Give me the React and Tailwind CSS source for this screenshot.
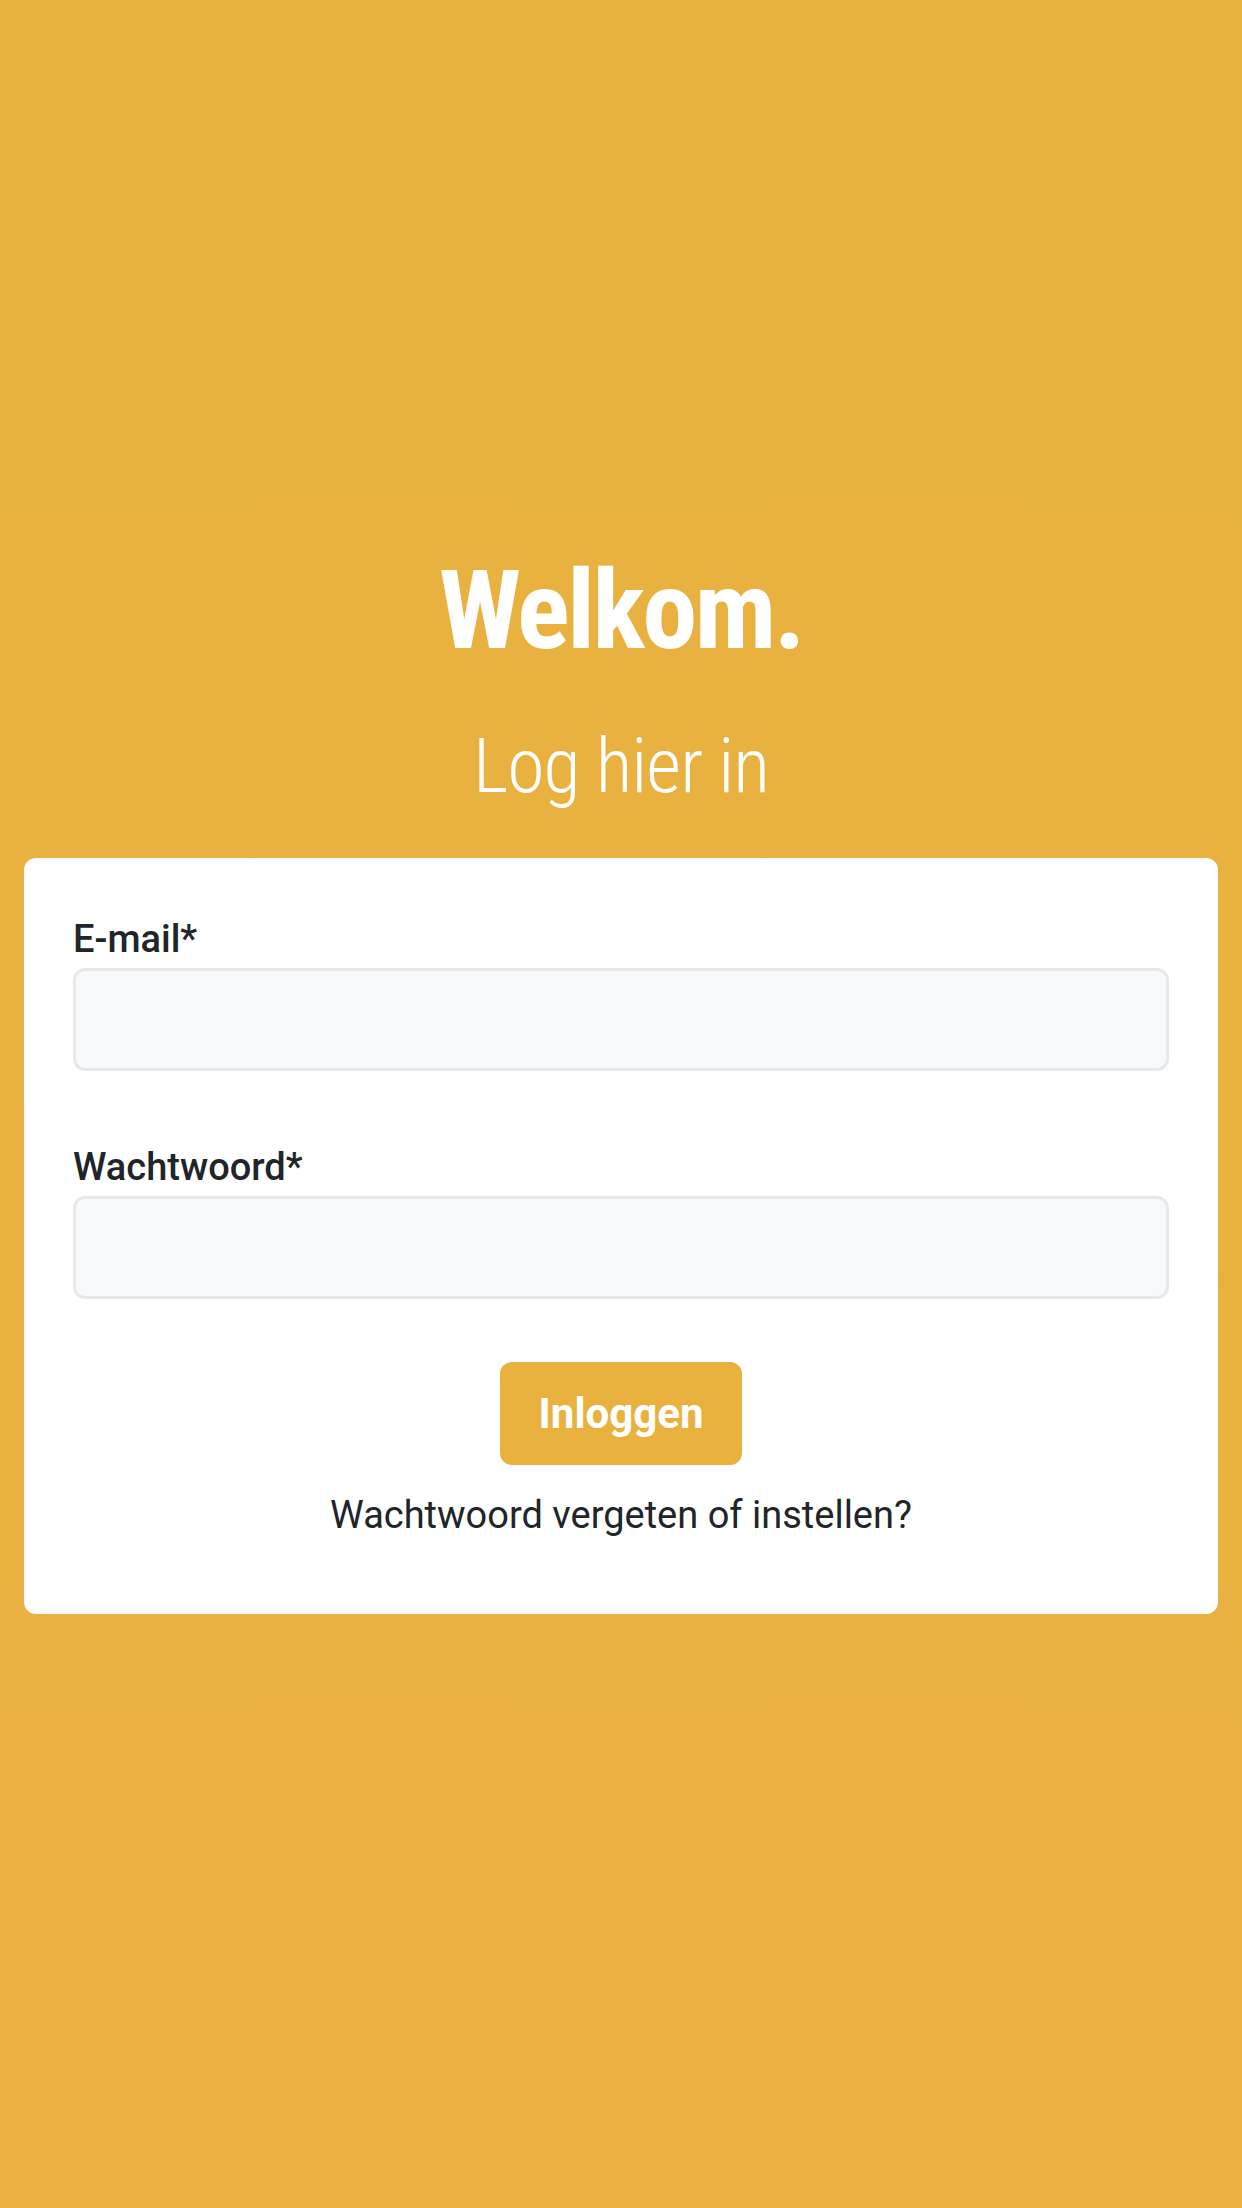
import { useState } from "react";

const Field = ({ label, type, value, onChange, className }) => (
  <div className={className}>
    <label className="block text-[38px] leading-none font-medium text-[#212529]">{label}</label>
    <input
      type={type}
      value={value}
      onChange={(e) => onChange(e.target.value)}
      className="mt-[10px] block w-full h-[103px] rounded-[12px] border-[3px] border-[#e6e8eb] bg-[#f8f9fb] px-6 text-[36px] text-[#212529] focus:outline-none"
    />
  </div>
);

export default function App() {
  const [email, setEmail] = useState("");
  const [password, setPassword] = useState("");

  return (
    <div className="min-h-[2208px] w-full bg-gradient-to-b from-[#e8b33f] to-[#ebaf41] font-['Roboto',sans-serif] pt-[556px] px-[24px]">
      {/* heading */}
      <h1 className="text-center text-white text-[110px] leading-none font-bold [font-stretch:75%] tracking-[-2.5px]">Welkom.</h1>
      <p className="mt-[62px] text-center text-white text-[76px] leading-none font-light [font-stretch:75%] tracking-[-1px]">Log hier in</p>

      {/* card */}
      <form
        onSubmit={(e) => e.preventDefault()}
        className="mt-[54px] bg-white rounded-[12px] px-[49px] pt-[62px] pb-[80px]"
      >
        <Field label="E-mail*" type="email" value={email} onChange={setEmail} />
        <Field label="Wachtwoord*" type="password" value={password} onChange={setPassword} className="mt-[77px]" />

        <div className="mt-[63px] flex justify-center">
          <button type="submit" className="w-[242px] h-[103px] rounded-[12px] bg-[#e9b23f] text-white text-[42px] font-bold">
            Inloggen
          </button>
        </div>
        <p className="mt-[31px] text-center text-[38px] leading-none text-[#212529]">Wachtwoord vergeten of instellen?</p>
      </form>
    </div>
  );
}
